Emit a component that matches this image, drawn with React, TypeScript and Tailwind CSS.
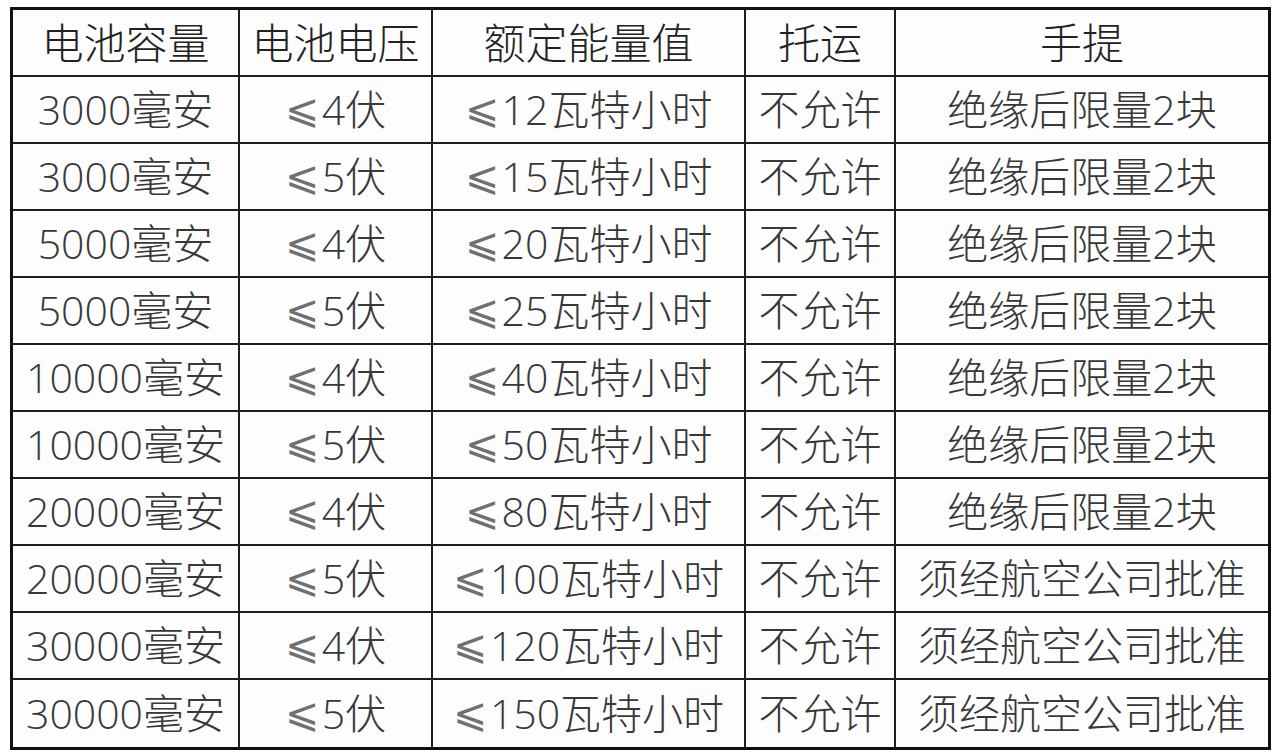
const rows: [string, string, string, string, string][] = [
  ['3000毫安', '⩽4伏', '⩽12瓦特小时', '不允许', '绝缘后限量2块'],
  ['3000毫安', '⩽5伏', '⩽15瓦特小时', '不允许', '绝缘后限量2块'],
  ['5000毫安', '⩽4伏', '⩽20瓦特小时', '不允许', '绝缘后限量2块'],
  ['5000毫安', '⩽5伏', '⩽25瓦特小时', '不允许', '绝缘后限量2块'],
  ['10000毫安', '⩽4伏', '⩽40瓦特小时', '不允许', '绝缘后限量2块'],
  ['10000毫安', '⩽5伏', '⩽50瓦特小时', '不允许', '绝缘后限量2块'],
  ['20000毫安', '⩽4伏', '⩽80瓦特小时', '不允许', '绝缘后限量2块'],
  ['20000毫安', '⩽5伏', '⩽100瓦特小时', '不允许', '须经航空公司批准'],
  ['30000毫安', '⩽4伏', '⩽120瓦特小时', '不允许', '须经航空公司批准'],
  ['30000毫安', '⩽5伏', '⩽150瓦特小时', '不允许', '须经航空公司批准'],
];

const header = ['电池容量', '电池电压', '额定能量值', '托运', '手提'];

// the ⩽ sign is thin in the source; DejaVu only has a heavy one, so lighten it
function CellText({ text }: { text: string }) {
  if (!text.startsWith('⩽')) return <>{text}</>;
  return (
    <>
      <span
        className="mr-[3px] text-[#707070]"
        style={{ fontFamily: '"DejaVu Sans", sans-serif' }}
      >
        ⩽
      </span>
      {text.slice(1)}
    </>
  );
}

function Row({ cells, head, last }: { cells: string[]; head?: boolean; last?: boolean }) {
  return (
    <div
      className={`grid grid-cols-[227px_193px_313px_150px_372px] h-[67px] ${
        last ? '' : 'border-b-2 border-[#1e1e1e]'
      }`}
    >
      {cells.map((c, i) => (
        <div
          key={i}
          className={`flex items-center justify-center whitespace-nowrap ${
            i < 4 ? 'border-r-2 border-[#1e1e1e]' : ''
          } ${head ? 'text-[#222] text-[42px]' : 'text-[#383838] text-[41px]'}`}
        >
          <CellText text={c} />
        </div>
      ))}
    </div>
  );
}

export default function App() {
  return (
    <div
      className="w-[1280px] h-[756px] bg-white pt-[7px] pl-[10px]"
      style={{ fontFamily: '"Open Sans", "Noto Sans CJK SC", "DejaVu Sans", sans-serif' }}
    >
      <div className="w-[1261px] border-[3px] border-[#111] bg-[#fdfdfd] font-light leading-none">
        <Row cells={header} head />
        {rows.map((r, i) => (
          <Row key={i} cells={r} last={i === rows.length - 1} />
        ))}
      </div>
    </div>
  );
}
